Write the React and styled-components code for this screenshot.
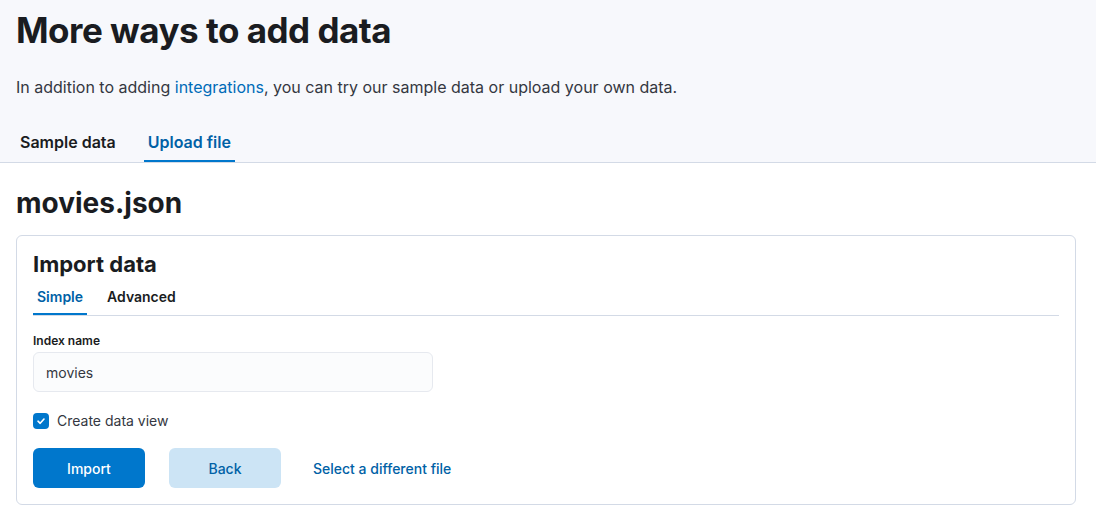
import styled, { createGlobalStyle } from "styled-components";

const GlobalStyle = createGlobalStyle`
  html, body {
    margin: 0;
    padding: 0;
    background: #ffffff;
    font-family: Inter, "Noto Sans", sans-serif;
    color: #1a1c21;
  }
  * { box-sizing: border-box; }
`;

const Header = styled.header`
  background: #f7f8fc;
  border-bottom: 1px solid #d3dae6;
  padding: 10px 16px 0;
`;

const PageTitle = styled.h1`
  margin: 0;
  font-size: 35px;
  line-height: 40px;
  font-weight: 700;
  letter-spacing: -0.5px;
  color: #1a1c21;
`;

const Intro = styled.p`
  margin: 25px 0 0;
  font-size: 16px;
  line-height: 24px;
  color: #343741;
`;

const Link = styled.a`
  color: #006bb8;
  text-decoration: none;
`;

const TabBar = styled.div`
  display: flex;
  gap: ${(p) => p.$gap || "24px"};
  margin-top: ${(p) => p.$top || "0"};
  border-bottom: ${(p) => (p.$line ? "1px solid #d3dae6" : "none")};
`;

const Tab = styled.button`
  background: none;
  border: none;
  font-family: inherit;
  font-size: ${(p) => p.$size || "16px"};
  font-weight: 600;
  padding: 0 4px;
  height: ${(p) => p.$height || "40px"};
  color: ${(p) => (p.$active ? "#0061a6" : "#1a1c21")};
  box-shadow: ${(p) => (p.$active ? "inset 0 -2px 0 #0077cc" : "none")};
  cursor: pointer;
`;

const Body = styled.main`
  padding: 22px 20px 24px 16px;
`;

const FileTitle = styled.h2`
  margin: 0;
  font-size: 28px;
  line-height: 36px;
  font-weight: 700;
  color: #1a1c21;
`;

const Panel = styled.section`
  margin-top: 14px;
  border: 1px solid #d3dae6;
  border-radius: 6px;
  padding: 14px 16px 16px;
`;

const PanelTitle = styled.h3`
  margin: 0;
  font-size: 22px;
  line-height: 28px;
  font-weight: 700;
  color: #1a1c21;
`;

const Form = styled.div`
  padding-top: 17px;
  display: flex;
  flex-direction: column;
`;

const Label = styled.label`
  font-size: 12px;
  line-height: 16px;
  font-weight: 600;
  color: #1a1c21;
`;

const Input = styled.input`
  margin-top: 3px;
  width: 400px;
  height: 40px;
  padding: 0 12px;
  border: 1px solid #e6e9ef;
  border-radius: 6px;
  background: #fbfcfd;
  font-family: inherit;
  font-size: 14px;
  color: #343741;
  outline: none;
`;

const CheckRow = styled.div`
  margin-top: 20px;
  display: flex;
  align-items: center;
  gap: 8px;
  font-size: 14px;
  color: #343741;
`;

const Box = styled.span`
  width: 16px;
  height: 16px;
  border-radius: 4px;
  background: #0077cc;
  display: inline-flex;
  align-items: center;
  justify-content: center;
`;

const Actions = styled.div`
  margin-top: 19px;
  display: flex;
  align-items: center;
  gap: 24px;
`;

const Button = styled.button`
  width: 112px;
  height: 40px;
  border: none;
  border-radius: 6px;
  font-family: inherit;
  font-size: 14px;
  font-weight: 500;
  background: ${(p) => (p.$primary ? "#0077cc" : "#cce4f5")};
  color: ${(p) => (p.$primary ? "#ffffff" : "#0061a6")};
  cursor: pointer;
`;

const TextButton = styled.button`
  background: none;
  border: none;
  padding: 0 8px;
  font-family: inherit;
  font-size: 14px;
  font-weight: 500;
  color: #0061a6;
  cursor: pointer;
`;

export default function App() {
  return (
    <>
      <GlobalStyle />
      <Header>
        <PageTitle>More ways to add data</PageTitle>
        <Intro>
          In addition to adding <Link href="#">integrations</Link>, you can try our sample data or
          upload your own data.
        </Intro>
        <TabBar $top="23px">
          <Tab>Sample data</Tab>
          <Tab $active>Upload file</Tab>
        </TabBar>
      </Header>
      <Body>
        <FileTitle>movies.json</FileTitle>
        <Panel>
          <PanelTitle>Import data</PanelTitle>
          <TabBar $gap="16px" $line>
            <Tab $size="14px" $height="37px" $active>Simple</Tab>
            <Tab $size="14px" $height="37px">Advanced</Tab>
          </TabBar>
          <Form>
            <Label>Index name</Label>
            <Input defaultValue="movies" />
            <CheckRow>
              <Box>
                <svg width="10" height="10" viewBox="0 0 10 10">
                  <path d="M2 5.2 L4.2 7.3 L8 3" fill="none" stroke="#fff" strokeWidth="1.6" strokeLinecap="round" strokeLinejoin="round" />
                </svg>
              </Box>
              Create data view
            </CheckRow>
            <Actions>
              <Button $primary>Import</Button>
              <Button>Back</Button>
              <TextButton>Select a different file</TextButton>
            </Actions>
          </Form>
        </Panel>
      </Body>
    </>
  );
}
